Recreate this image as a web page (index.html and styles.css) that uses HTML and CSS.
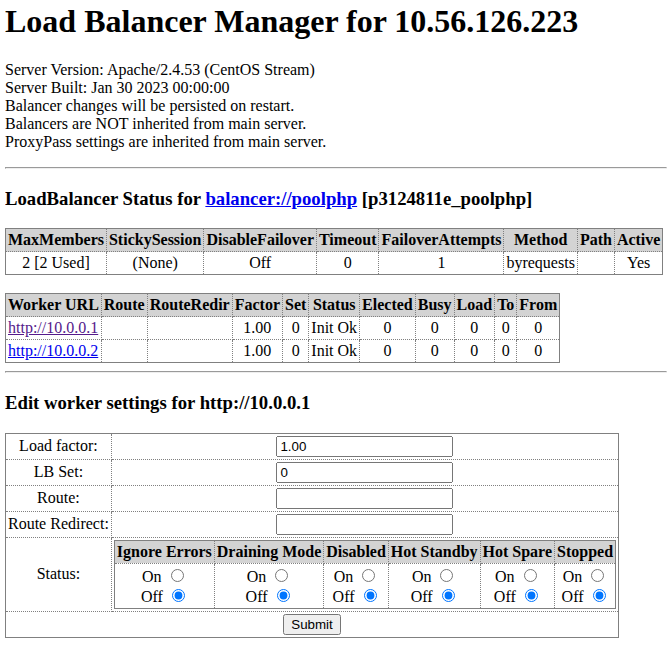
FILE: index.html
```html
<!DOCTYPE html>
<html>
<head>
<meta charset="utf-8">
<title>Balancer Manager</title>
<link rel="stylesheet" href="styles.css">
</head>
<body>
<h1 class="title">Load Balancer Manager for 10.56.126.223</h1>
<dl class="info">
<dt>Server Version: Apache/2.4.53 (CentOS Stream)</dt>
<dt>Server Built: Jan 30 2023 00:00:00</dt>
<dt>Balancer changes will be persisted on restart.</dt>
<dt>Balancers are NOT inherited from main server.</dt>
<dt>ProxyPass settings are inherited from main server.</dt>
</dl>
<hr class="rule">
<h3 class="section">LoadBalancer Status for <a class="link" href="#">balancer://poolphp</a> [p3124811e_poolphp]</h3>
<table class="grid">
<tr><th>MaxMembers</th><th>StickySession</th><th>DisableFailover</th><th>Timeout</th><th>FailoverAttempts</th><th>Method</th><th>Path</th><th>Active</th></tr>
<tr><td>2 [2 Used]</td><td>(None)</td><td>Off</td><td>0</td><td>1</td><td>byrequests</td><td></td><td>Yes</td></tr>
</table>
<br>
<table class="grid">
<tr><th>Worker URL</th><th>Route</th><th>RouteRedir</th><th>Factor</th><th>Set</th><th>Status</th><th>Elected</th><th>Busy</th><th>Load</th><th>To</th><th>From</th></tr>
<tr><td class="left"><a class="link visited" href="#">http://10.0.0.1</a></td><td></td><td></td><td>1.00</td><td>0</td><td>Init Ok</td><td>0</td><td>0</td><td>0</td><td>0</td><td>0</td></tr>
<tr><td class="left"><a class="link" href="#">http://10.0.0.2</a></td><td></td><td></td><td>1.00</td><td>0</td><td>Init Ok</td><td>0</td><td>0</td><td>0</td><td>0</td><td>0</td></tr>
</table>
<hr class="rule">
<h3 class="section">Edit worker settings for http://10.0.0.1</h3>
<form class="editform" method="post" action="#">
<table class="grid">
<tr><td>Load factor:</td><td><input class="field" type="text" value="1.00"></td></tr>
<tr><td>LB Set:</td><td><input class="field" type="text" value="0"></td></tr>
<tr><td>Route:</td><td><input class="field" type="text" value=""></td></tr>
<tr><td>Route Redirect:</td><td><input class="field" type="text" value=""></td></tr>
<tr><td>Status:</td><td><table class="grid">
<tr><th>Ignore Errors</th><th>Draining Mode</th><th>Disabled</th><th>Hot Standby</th><th>Hot Spare</th><th>Stopped</th></tr>
<tr>
<td>On <input type="radio" name="w_status_I" value="1"><br> Off <input type="radio" name="w_status_I" value="0" checked></td>
<td>On <input type="radio" name="w_status_N" value="1"><br> Off <input type="radio" name="w_status_N" value="0" checked></td>
<td>On <input type="radio" name="w_status_D" value="1"><br> Off <input type="radio" name="w_status_D" value="0" checked></td>
<td>On <input type="radio" name="w_status_H" value="1"><br> Off <input type="radio" name="w_status_H" value="0" checked></td>
<td>On <input type="radio" name="w_status_R" value="1"><br> Off <input type="radio" name="w_status_R" value="0" checked></td>
<td>On <input type="radio" name="w_status_S" value="1"><br> Off <input type="radio" name="w_status_S" value="0" checked></td>
</tr>
</table></td></tr>
<tr><td colspan="2"><input class="submit" type="submit" value="Submit"></td></tr>
</table>
</form>
</body>
</html>
```
FILE: styles.css
```css
html, body {
  background: #fff;
}
body {
  margin: 0 0 0 5px;
  font-family: "Liberation Serif", "Times New Roman", serif;
  font-size: 16px;
  color: #000;
}
.title {
  font-size: 32px;
  font-weight: bold;
  margin: 3px 0 21px 0;
}
.info {
  margin: 0 0 16px 0;
}
.rule {
  margin: 8px 0;
  border-width: 1px;
  border-style: solid;
  border-color: #9a9a9a #eee #eee #9a9a9a;
  height: 0;
}
.section {
  font-size: 18.72px;
  font-weight: bold;
  margin: 18.72px 0;
}
.link {
  color: #0000ee;
}
.visited {
  color: #551a8b;
}
.grid {
  border: 1px solid gray;
  border-collapse: collapse;
  background-color: white;
  text-align: center;
}
.grid th {
  border: 1px dotted gray;
  padding: 2px;
  background-color: lightgray;
  text-align: center;
}
.grid td {
  border: 1px dotted gray;
  padding: 2px;
  background-color: white;
  text-align: center;
}
.grid td.left {
  text-align: left;
}
.editform {
  margin: 0;
}
.field {
  font-family: "Liberation Sans", Arial, sans-serif;
  font-size: 13.333px;
  box-sizing: border-box;
  width: 177px;
  height: 21px;
  margin: 0;
}
.submit {
  font-family: "Liberation Sans", Arial, sans-serif;
  font-size: 13.333px;
}
```
